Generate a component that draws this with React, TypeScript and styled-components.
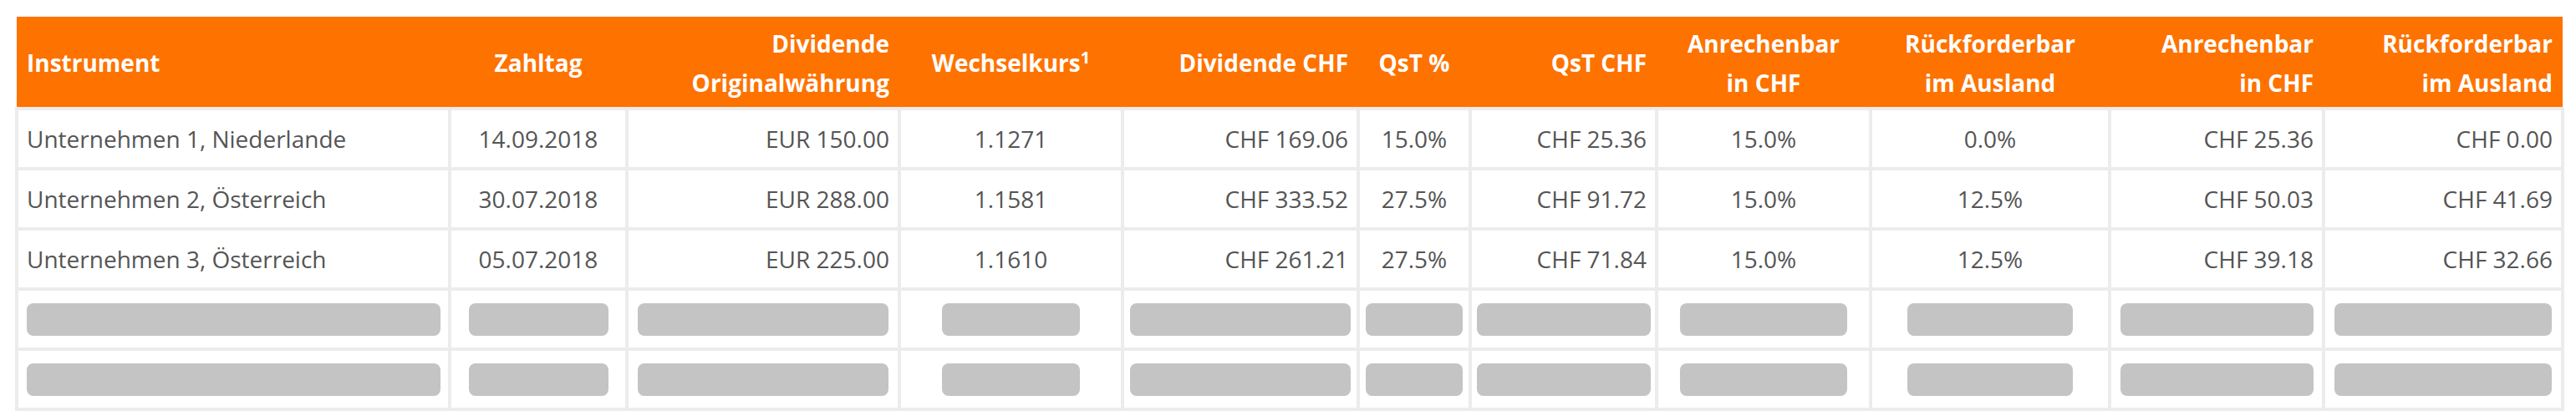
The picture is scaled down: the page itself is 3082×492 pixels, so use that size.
import React from "react";
import styled, { createGlobalStyle } from "styled-components";

type Align = "left" | "center" | "right";

interface Column {
  width: number;
  align: Align;
  skeleton: number;
  header: React.ReactNode;
}

const GlobalStyle = createGlobalStyle`
  html, body {
    margin: 0;
    padding: 0;
    background: #ffffff;
  }
  body {
    font-family: "Open Sans", "Liberation Sans", Arial, sans-serif;
  }
`;

const justify = (a: Align) =>
  a === "left" ? "flex-start" : a === "right" ? "flex-end" : "center";

const Table = styled.div`
  margin: 20px 0 0 18px;
  width: 3050px;
`;

const HeadRow = styled.div<{ $cols: string }>`
  display: grid;
  grid-template-columns: ${(p) => p.$cols};
  column-gap: 4px;
  margin: 0 2px;
  padding: 3px 2px 0;
  height: 108px;
  box-sizing: border-box;
  background: #fe7200;
`;

const HeadCell = styled.div<{ $align: Align }>`
  display: flex;
  flex-direction: column;
  justify-content: center;
  align-items: ${(p) => justify(p.$align)};
  padding: 0 10px;
  min-width: 0;
`;

const HeadLabel = styled.span<{ $align: Align }>`
  display: block;
  text-align: ${(p) => p.$align};
  font-size: 28px;
  line-height: 47px;
  font-weight: 700;
  color: #ffffff;
  white-space: nowrap;
`;

const Sup = styled.sup`
  font-size: 20px;
  line-height: 0;
  vertical-align: super;
`;

const Body = styled.div`
  display: grid;
  row-gap: 4px;
  padding: 4px;
  background: #ececec;
`;

const Row = styled.div<{ $cols: string }>`
  display: grid;
  grid-template-columns: ${(p) => p.$cols};
  column-gap: 4px;
  height: 68px;
`;

const Cell = styled.div<{ $align: Align }>`
  display: flex;
  align-items: center;
  justify-content: ${(p) => justify(p.$align)};
  padding: 0 10px;
  background: #ffffff;
  font-size: 28px;
  color: #555555;
  white-space: nowrap;
  min-width: 0;
`;

const SkeletonCell = styled.div`
  display: flex;
  align-items: center;
  justify-content: center;
  background: #ffffff;
  min-width: 0;
`;

const Skeleton = styled.div<{ $w: number }>`
  width: ${(p) => p.$w}px;
  height: 39px;
  border-radius: 8px;
  background: #c4c4c4;
`;

const columns: Column[] = [
  { width: 514, align: "left", skeleton: 495, header: "Instrument" },
  { width: 208, align: "center", skeleton: 167, header: "Zahltag" },
  {
    width: 322,
    align: "right",
    skeleton: 300,
    header: (
      <>
        Dividende
        <br />
        Originalwährung
      </>
    ),
  },
  {
    width: 263,
    align: "center",
    skeleton: 165,
    header: (
      <>
        Wechselkurs<Sup>1</Sup>
      </>
    ),
  },
  { width: 278, align: "right", skeleton: 264, header: "Dividende CHF" },
  { width: 130, align: "center", skeleton: 116, header: "QsT %" },
  { width: 219, align: "right", skeleton: 208, header: "QsT CHF" },
  {
    width: 252,
    align: "center",
    skeleton: 200,
    header: (
      <>
        Anrechenbar
        <br />
        in CHF
      </>
    ),
  },
  {
    width: 282,
    align: "center",
    skeleton: 198,
    header: (
      <>
        Rückforderbar
        <br />
        im Ausland
      </>
    ),
  },
  {
    width: 252,
    align: "right",
    skeleton: 231,
    header: (
      <>
        Anrechenbar
        <br />
        in CHF
      </>
    ),
  },
  {
    width: 282,
    align: "right",
    skeleton: 260,
    header: (
      <>
        Rückforderbar
        <br />
        im Ausland
      </>
    ),
  },
];

const rows: string[][] = [
  [
    "Unternehmen 1, Niederlande",
    "14.09.2018",
    "EUR 150.00",
    "1.1271",
    "CHF 169.06",
    "15.0%",
    "CHF 25.36",
    "15.0%",
    "0.0%",
    "CHF 25.36",
    "CHF 0.00",
  ],
  [
    "Unternehmen 2, Österreich",
    "30.07.2018",
    "EUR 288.00",
    "1.1581",
    "CHF 333.52",
    "27.5%",
    "CHF 91.72",
    "15.0%",
    "12.5%",
    "CHF 50.03",
    "CHF 41.69",
  ],
  [
    "Unternehmen 3, Österreich",
    "05.07.2018",
    "EUR 225.00",
    "1.1610",
    "CHF 261.21",
    "27.5%",
    "CHF 71.84",
    "15.0%",
    "12.5%",
    "CHF 39.18",
    "CHF 32.66",
  ],
];

const placeholderRows = 2;

export default function App() {
  const cols = columns.map((c) => `${c.width}px`).join(" ");
  return (
    <>
      <GlobalStyle />
      <Table>
        <HeadRow $cols={cols}>
          {columns.map((c, i) => (
            <HeadCell key={i} $align={c.align}>
              <HeadLabel $align={c.align}>{c.header}</HeadLabel>
            </HeadCell>
          ))}
        </HeadRow>
        <Body>
          {rows.map((r, ri) => (
            <Row key={ri} $cols={cols}>
              {r.map((v, ci) => (
                <Cell key={ci} $align={columns[ci].align}>
                  {v}
                </Cell>
              ))}
            </Row>
          ))}
          {Array.from({ length: placeholderRows }).map((_, ri) => (
            <Row key={`p${ri}`} $cols={cols}>
              {columns.map((c, ci) => (
                <SkeletonCell key={ci}>
                  <Skeleton $w={c.skeleton} />
                </SkeletonCell>
              ))}
            </Row>
          ))}
        </Body>
      </Table>
    </>
  );
}
